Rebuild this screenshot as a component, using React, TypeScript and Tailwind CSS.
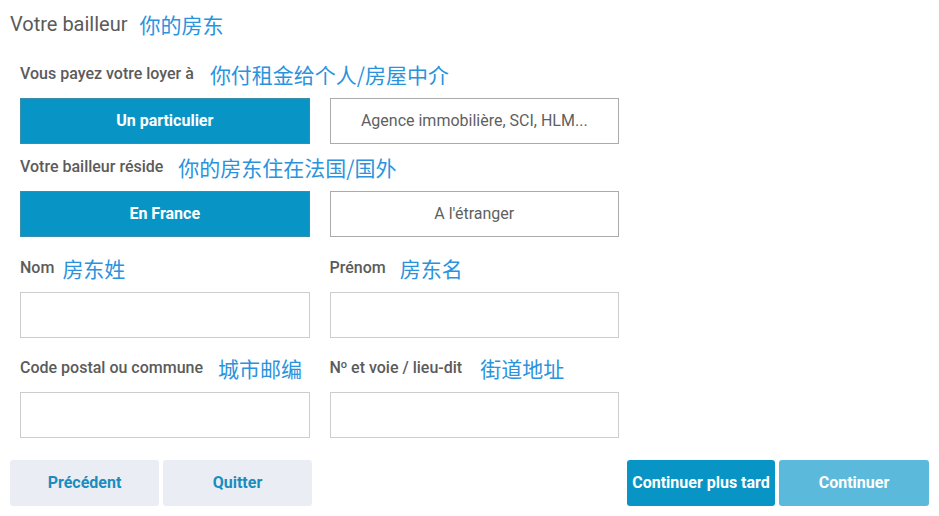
import React from 'react';

const zh = "font-['Noto_Sans_CJK_SC',sans-serif] text-[21px] text-[#2b93dd] font-normal leading-none";

// Label line: French label followed by a blue Chinese note
const Label = ({ fr, cn, gap = 'ml-[15px]' }: { fr: React.ReactNode; cn: string; gap?: string }) => (
  <div className="flex items-center h-[24px]">
    <span className="text-[16px] font-medium text-[#5b5b5b]">{fr}</span>
    <span className={`${zh} ${gap}`}>{cn}</span>
  </div>
);

const Choice = ({ label, active }: { label: string; active?: boolean }) => (
  <div
    className={`h-[46px] flex items-center justify-center border text-[16px] ${
      active
        ? 'bg-[#0895c6] border-[#3a8eab] text-white font-bold'
        : 'bg-white border-[#ababab] text-[#5f5f5f]'
    }`}
  >
    {label}
  </div>
);

const Input = () => <div className="h-[46px] border border-[#cdcdcd] bg-white" />;

export default function App() {
  return (
    <div className="w-[939px] h-[516px] bg-white font-['Roboto',sans-serif] overflow-hidden">
      {/* Title */}
      <div className="flex items-center h-[28px] mt-[10px] px-[10px]">
        <span className="text-[20px] text-[#5a5a5a]">Votre bailleur</span>
        <span className={`${zh} text-[20.5px] ml-[12px]`}>你的房东</span>
      </div>

      <div className="px-[20px] w-[639px]">
        {/* Vous payez */}
        <div className="mt-[24px]">
          <Label fr="Vous payez votre loyer à" cn="你付租金给个人/房屋中介" gap="ml-[16px]" />
          <div className="grid grid-cols-2 gap-[20px] mt-[12px]">
            <Choice label="Un particulier" active />
            <Choice label="Agence immobilière, SCI, HLM..." />
          </div>
        </div>

        {/* Réside */}
        <div className="mt-[11px]">
          <Label fr="Votre bailleur réside" cn="你的房东住在法国/国外" />
          <div className="grid grid-cols-2 gap-[20px] mt-[12px]">
            <Choice label="En France" active />
            <Choice label="A l'étranger" />
          </div>
        </div>

        {/* Nom / Prénom */}
        <div className="grid grid-cols-2 gap-[20px] mt-[19px]">
          <div>
            <Label fr="Nom" cn="房东姓" gap="ml-[8px]" />
            <div className="mt-[12px]">
              <Input />
            </div>
          </div>
          <div>
            <Label fr="Prénom" cn="房东名" gap="ml-[14px]" />
            <div className="mt-[12px]">
              <Input />
            </div>
          </div>
        </div>

        {/* Adresse */}
        <div className="grid grid-cols-2 gap-[20px] mt-[18px]">
          <div>
            <Label fr="Code postal ou commune" cn="城市邮编" />
            <div className="mt-[12px]">
              <Input />
            </div>
          </div>
          <div>
            <Label
              fr={
                <>
                  N<sup className="text-[11px]">o</sup> et voie / lieu-dit
                </>
              }
              cn="街道地址"
              gap="ml-[18px]"
            />
            <div className="mt-[12px]">
              <Input />
            </div>
          </div>
        </div>
      </div>

      {/* Footer buttons */}
      <div className="flex justify-between px-[10px] mt-[22px]">
        <div className="flex gap-[4px]">
          <button className="w-[149px] h-[46px] rounded-[3px] bg-[#eaeef4] text-[#1a8cbf] text-[16px] font-bold">
            Précédent
          </button>
          <button className="w-[149px] h-[46px] rounded-[3px] bg-[#eaeef4] text-[#1a8cbf] text-[16px] font-bold">
            Quitter
          </button>
        </div>
        <div className="flex gap-[4px]">
          <button className="w-[148px] h-[46px] rounded-[3px] bg-[#0895c6] text-white text-[16px] font-bold">
            Continuer plus tard
          </button>
          <button className="w-[150px] h-[46px] rounded-[3px] bg-[#5bb9db] text-white text-[16px] font-bold">
            Continuer
          </button>
        </div>
      </div>
    </div>
  );
}
